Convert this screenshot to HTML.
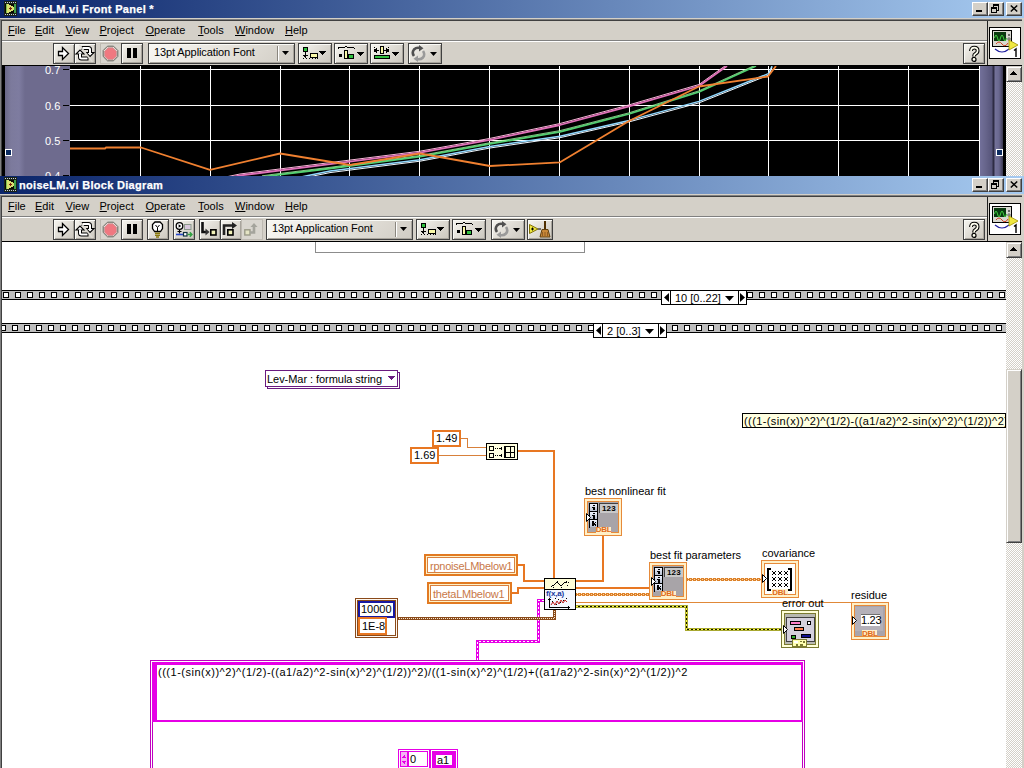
<!DOCTYPE html><html><head><meta charset="utf-8"><title>noiseLM.vi</title><style>
*{margin:0;padding:0;box-sizing:border-box}
html,body{width:1024px;height:768px;overflow:hidden;background:#D4D0C8;font-family:"Liberation Sans",sans-serif;font-size:11px;color:#000;position:relative;white-space:nowrap}
.a{position:absolute}
.tb{position:absolute;left:0;width:1024px;height:18px;background:linear-gradient(to right,#0A246A 0%,#A6CAF0 100%)}
.tt{position:absolute;left:19px;color:#fff;font-weight:bold;font-size:11px;letter-spacing:0.3px;-webkit-text-stroke:0.25px #fff;white-space:nowrap;line-height:14px}
.cb{position:absolute;width:16px;height:14px;background:#D4D0C8;border-top:1px solid #fff;border-left:1px solid #fff;border-right:1px solid #404040;border-bottom:1px solid #404040;box-shadow:inset -1px -1px #808080}
.mi{position:absolute;white-space:nowrap;font-size:11px;line-height:13px}
.btn{position:absolute;height:20px;background:linear-gradient(135deg,#F6F5F0 0%,#E2DFD8 45%,#CBC7BE 100%);border:1px solid #404040;box-shadow:inset 1px 1px #fafaf6,inset -1px -1px #a8a49c}
.film{position:absolute;left:2px;width:1004px;height:10px;background:#BEBEBE;border-top:1px solid #000;border-bottom:1px solid #000;overflow:hidden}
.sq{position:absolute;top:1px;width:6px;height:6px;border:1px solid #000;background:#fff}
.lbl{position:absolute;white-space:nowrap;font-size:11px;line-height:14px;color:#000}
svg{position:absolute;overflow:visible}
</style></head><body><div class="tb" style="top:0px"></div><svg style="left:4px;top:1px" width="13" height="15" viewBox="0 0 13 15" shape-rendering="crispEdges">
<rect x="0" y="0" width="13" height="15" fill="#1a2418"/>
<path d="M1 1.5h1M3 1.5h1M5 1.5h1M7 1.5h1M9 1.5h1M11 1.5h1M1 13.5h1M3 13.5h1M5 13.5h1M7 13.5h1M9 13.5h1M11 13.5h1" stroke="#c8d0e0"/>
<rect x="1" y="3" width="11" height="9" fill="#0a0a04"/>
<path d="M3 3h2v1h2v1h2v1h2v3h-2v1h-2v1h-2v1h-2z" fill="#D8E070"/>
<rect x="2" y="3" width="1" height="9" fill="#80c050"/>
<rect x="10" y="3" width="2" height="9" fill="#40a048"/>
<path d="M5 7h3v1h-3zM6 6h1v3h-1z" fill="#802010"/>
</svg><div class="tt" style="top:2px">noiseLM.vi Front Panel *</div><div class="cb" style="left:972px;top:2px"><div class="a" style="left:3px;top:7px;width:6px;height:2px;background:#000;"></div></div><div class="cb" style="left:988px;top:2px"><svg style="left:2px;top:1px" width="9" height="9" viewBox="0 0 9 9" shape-rendering="crispEdges">
<rect x="2" y="0" width="6" height="2" fill="#000"/><path d="M7.5 2v4h-2M2.5 2v1" stroke="#000" fill="none"/>
<rect x="0" y="3" width="6" height="2" fill="#000"/><path d="M0.5 5v3.5h5v-3.5" stroke="#000" fill="none"/></svg></div><div class="cb" style="left:1006px;top:2px"><svg style="left:3px;top:2px" width="8" height="7" viewBox="0 0 8 7">
<path d="M0.8 0.5L7.2 6.5M7.2 0.5L0.8 6.5" stroke="#000" stroke-width="1.5"/></svg></div><div class="a" style="left:0px;top:18px;width:1024px;height:1px;background:#D4D0C8;"></div><div class="a" style="left:0px;top:19px;width:1022px;height:1px;background:#808080;"></div><div class="a" style="left:1px;top:20px;width:1021px;height:1px;background:#404040;"></div><div class="a" style="left:0px;top:19px;width:1px;height:600px;background:#808080;"></div><div class="a" style="left:1px;top:20px;width:1px;height:600px;background:#404040;"></div><div class="mi" style="left:8px;top:24px"><u>F</u>ile</div><div class="mi" style="left:35px;top:24px"><u>E</u>dit</div><div class="mi" style="left:65.5px;top:24px"><u>V</u>iew</div><div class="mi" style="left:99.5px;top:24px"><u>P</u>roject</div><div class="mi" style="left:145.5px;top:24px"><u>O</u>perate</div><div class="mi" style="left:198px;top:24px"><u>T</u>ools</div><div class="mi" style="left:235px;top:24px"><u>W</u>indow</div><div class="mi" style="left:285px;top:24px"><u>H</u>elp</div><div class="a" style="left:2px;top:40px;width:985px;height:1px;background:#808080;"></div><div class="a" style="left:2px;top:41px;width:985px;height:1px;background:#FFFFFF;"></div><div class="a" style="left:987px;top:21px;width:1px;height:45px;background:#202020;"></div><div class="a" style="left:989px;top:27px;width:32px;height:32px;background:#fff;border:1px solid #000">
<svg style="left:2px;top:2px" width="28" height="28" viewBox="0 0 28 28">
<rect x="0.5" y="0.5" width="19" height="16" fill="#d8d8d0" stroke="#000"/>
<rect x="2" y="2" width="12" height="9" fill="#0a3a10"/>
<path d="M2.5 8 q1.5 -6 3 0 t3 0 t3 0 t3 0" stroke="#40d040" fill="none" stroke-width="1"/>
<circle cx="17" cy="5" r="1" fill="#444"/><circle cx="17" cy="9" r="1.2" fill="none" stroke="#444" stroke-width="0.8"/>
<path d="M3 19 q7 6 14 0" stroke="#2020a0" fill="none" stroke-width="1.2"/>
<path d="M4 14 q3 -4 6 0 t6 -1" stroke="#d04020" fill="none" stroke-width="1"/>
<path d="M17 10 L17 20 L26 15 Z" fill="#f0e840" stroke="#a09000" stroke-width="0.8"/>
<path d="M22 20.5l2-1.5v8" stroke="#000" stroke-width="1.4" fill="none"/>
</svg></div><div class="btn" style="left:963px;top:43px;width:22px;height:21px"><svg style="left:5px;top:2px" width="11" height="16" viewBox="0 0 11 16">
<path d="M2 5 Q2 1.6 5.2 1.6 Q8.6 1.6 8.6 4.8 Q8.6 6.8 6.6 7.8 Q5 8.6 5 10.4" fill="none" stroke="#000" stroke-width="3.8"/>
<path d="M2 5 Q2 1.6 5.2 1.6 Q8.6 1.6 8.6 4.8 Q8.6 6.8 6.6 7.8 Q5 8.6 5 10.4" fill="none" stroke="#fffff0" stroke-width="1.7"/>
<circle cx="5" cy="13.4" r="2" fill="#fffff0" stroke="#000" stroke-width="1.2"/></svg></div><div class="btn" style="left:53px;top:43px;width:22px;height:21px"></div><div class="btn" style="left:74px;top:43px;width:22px;height:21px"></div><div class="a" style="left:100px;top:43px;width:22px;height:21px;background:#D9D6CF;border:1px solid #BDB9B1"></div><div class="btn" style="left:121px;top:43px;width:22px;height:21px"></div><div class="btn" style="left:148px;top:43px;width:147px;height:21px;background:linear-gradient(135deg,#F8F7F3,#E6E3DC 50%,#D0CCC4)"><div class="a" style="left:5px;top:1px;font-size:11px;line-height:14px;white-space:nowrap;letter-spacing:-0.1px">13pt Application Font</div></div><div class="btn" style="left:298px;top:43px;width:34px;height:21px"></div><div class="btn" style="left:334px;top:43px;width:34px;height:21px"></div><div class="btn" style="left:370px;top:43px;width:34px;height:21px"></div><div class="btn" style="left:408px;top:43px;width:34px;height:21px"></div><svg style="left:0;top:0" width="1024" height="768"><path d="M58.5 51.5H62.5V47.5L68.5 53.5L62.5 59.5V55.5H58.5Z" fill="#fff" stroke="#000" stroke-width="1.3" stroke-linejoin="miter"/><g transform="translate(0,-176)"><path d="M81.5 224H88.5Q90 224 90 225.5V228.5" fill="none" stroke="#000" stroke-width="4"/><path d="M86 228.5L94 228.5L90 232.5Z" fill="#fff" stroke="#000" stroke-width="1.1"/><path d="M82.5 224H88.5Q90 224 90 225.5V229" fill="none" stroke="#fff" stroke-width="2"/><path d="M88.5 234.5H81.5Q80 234.5 80 233V230" fill="none" stroke="#000" stroke-width="4"/><path d="M76 230L84 230L80 226Z" fill="#fff" stroke="#000" stroke-width="1.1"/><path d="M87.5 234.5H81.5Q80 234.5 80 233V229.5" fill="none" stroke="#fff" stroke-width="2"/><path d="M79.5 221L92.5 238" stroke="#DEDBD4" stroke-width="1.3"/></g><g transform="translate(0,-176)"><path d="M107.5 222.2h6l4.3 4.3v6l-4.3 4.3h-6l-4.3-4.3v-6z" fill="#F2E8E4" stroke="#606058" stroke-width="1"/><path d="M108 223.8h5l3.4 3.4v5l-3.4 3.4h-5l-3.4-3.4v-5z" fill="#F07880" stroke="#C09090" stroke-width="0.8"/></g><rect x="127" y="48" width="4" height="10" fill="#000"/><rect x="133" y="48" width="4" height="10" fill="#000"/><rect x="277" y="46" width="1" height="15" fill="#8A867E"/><rect x="278" y="46" width="1" height="15" fill="#fff"/><path d="M282 51h7l-3.5 4z" fill="#000"/><g transform="translate(298,43)" shape-rendering="crispEdges"><rect x="5.5" y="4.5" width="4" height="4" fill="#30C040" stroke="#000"/><path d="M7.5 9V14M5 12.5h5" stroke="#000"/><path d="M6 12l1.5 2l1.5-2" stroke="#000" fill="none"/><rect x="12.5" y="10.5" width="7" height="4" fill="#F8F8A8" stroke="#000"/><path d="M5 15.5h1M8 15.5h1M11 15.5h1M14 15.5h1M17 15.5h1M19 15.5h1" stroke="#000"/><path d="M21 8h7l-3.5 4z" fill="#000"/></g><g transform="translate(334,43)" shape-rendering="crispEdges"><path d="M4 4.5h7M13 4.5h7M11 3.5h2" stroke="#000"/><path d="M4 5v1M20 5v1" stroke="#000"/><rect x="5" y="11" width="3" height="3" fill="#000"/><rect x="10.5" y="7.5" width="3" height="8" fill="#F8F8A8" stroke="#000"/><rect x="14.5" y="11.5" width="5" height="4" fill="#30C040" stroke="#000"/><path d="M23 9h7l-3.5 4z" fill="#000"/></g><g transform="translate(370,43)" shape-rendering="crispEdges"><path d="M4.5 4v1M4.5 6v1M4.5 8v1M18.5 4v1M18.5 6v1M18.5 8v1" stroke="#000"/><path d="M5 7.5h4M14 7.5h4" stroke="#000"/><path d="M7 5.5l-2 2l2 2M16 5.5l2 2l-2 2" stroke="#000" fill="none"/><rect x="10.5" y="3.5" width="3" height="7" fill="#F8F8A8" stroke="#000"/><rect x="4.5" y="12.5" width="15" height="3" fill="#30C040" stroke="#000"/><path d="M22 9h7l-3.5 4z" fill="#000"/></g><g transform="translate(408,43)"><path d="M6 13Q3.5 9.5 6 6.5Q8.5 4 12 5" fill="none" stroke="#505050" stroke-width="2.6"/><path d="M11 2L15.5 5.2L11 8.5Z" fill="#505050"/><path d="M15 8Q17.5 11.5 15 14.5Q12.5 17 9 16" fill="none" stroke="#9A9A9A" stroke-width="2.6"/><path d="M10 19L5.5 15.8L10 12.5Z" fill="#9A9A9A"/><path d="M22 9h7l-3.5 4z" fill="#000"/></g></svg><div class="a" style="left:2px;top:65px;width:1020px;height:1px;background:#000;"></div><div class="a" style="left:2px;top:66px;width:3px;height:110px;background:#000;"></div><div class="a" style="left:5px;top:66px;width:65px;height:110px;background:linear-gradient(to right,#6a6888 0px,#7c7a9c 6px,#7e7ca0 14px,#6e6b8e 20px,#6e6b8e 100%)"></div><div class="a" style="left:70px;top:66px;width:910px;height:110px;background:#000;"></div><div class="a" style="left:980px;top:66px;width:23px;height:110px;background:linear-gradient(to right,#72709A 0px,#66648A 6px,#56547A 12px,#2E2C44 13px,#2E2C44 14px,#74729A 15px,#6A6890 19px,#3A3850 23px)"></div><div class="a" style="left:1003px;top:66px;width:3px;height:110px;background:#000;"></div><div class="a" style="left:45px;top:63px;color:#fff;font-size:11px;line-height:14px">0.7</div><div class="a" style="left:63px;top:69px;width:6px;height:1px;background:#000;"></div><div class="a" style="left:45px;top:99px;color:#fff;font-size:11px;line-height:14px">0.6</div><div class="a" style="left:63px;top:105px;width:6px;height:1px;background:#000;"></div><div class="a" style="left:45px;top:134px;color:#fff;font-size:11px;line-height:14px">0.5</div><div class="a" style="left:63px;top:140px;width:6px;height:1px;background:#000;"></div><div class="a" style="left:45px;top:169px;color:#fff;font-size:11px;line-height:14px">0.4</div><div class="a" style="left:63px;top:175px;width:6px;height:1px;background:#000;"></div><div class="a" style="left:5px;top:149px;width:7px;height:7px;background:#0a2a60;border:1px solid #fff"></div><div class="a" style="left:996px;top:149px;width:7px;height:7px;background:#0a2a60;border:1px solid #fff"></div><svg style="left:0;top:0" width="1024" height="176" viewBox="0 0 1024 176"><g shape-rendering="crispEdges"><rect x="140" y="66" width="1" height="110" fill="#fff"/><rect x="210" y="66" width="1" height="110" fill="#fff"/><rect x="280" y="66" width="1" height="110" fill="#fff"/><rect x="349" y="66" width="1" height="110" fill="#fff"/><rect x="419" y="66" width="1" height="110" fill="#fff"/><rect x="489" y="66" width="1" height="110" fill="#fff"/><rect x="559" y="66" width="1" height="110" fill="#fff"/><rect x="629" y="66" width="1" height="110" fill="#fff"/><rect x="699" y="66" width="1" height="110" fill="#fff"/><rect x="768" y="66" width="1" height="110" fill="#fff"/><rect x="838" y="66" width="1" height="110" fill="#fff"/><rect x="908" y="66" width="1" height="110" fill="#fff"/><rect x="979" y="66" width="1" height="110" fill="#fff"/><rect x="70" y="69" width="910" height="1" fill="#fff"/><rect x="70" y="105" width="910" height="1" fill="#fff"/><rect x="70" y="140" width="910" height="1" fill="#fff"/></g><g fill="none" stroke-linejoin="round"><clipPath id="pc"><rect x="70" y="66" width="910" height="110"/></clipPath><g clip-path="url(#pc)"><polyline points="228,176.5 240,174.0 330,162.6 420,151.2 490,138.4 560,123.5 629,104.9 699,84.5 727,64.5" stroke="#F8B8D8" stroke-width="1"/><polyline points="228,178 240,175.5 330,164.1 420,152.7 490,139.9 560,125 629,106.4 699,86 727,66" stroke="#E070B8" stroke-width="1.8"/><polyline points="262,177 280,174.6 330,168.5 420,156.7 490,143.9 560,131.8 629,114 699,92 756,66" stroke="#50D070" stroke-width="1.8"/><polyline points="262,175.8 280,173.4 330,167.3 420,155.5 490,142.70000000000002 560,130.60000000000002 629,112.8 699,90.8 756,64.8" stroke="#A0F0A0" stroke-width="0.8"/><polyline points="296,178 330,171.1 420,159.7 490,146.5 560,136.2 629,120.4 699,101.4 769,73.4 772,66" stroke="#90D8FF" stroke-width="1.5"/><polyline points="296,179.5 330,172.6 420,161.2 490,148.0 560,137.7 629,121.9 699,102.9 769,74.9 772,67.5" stroke="#F0F8FF" stroke-width="1"/><polyline points="70,148.5 105,148.5 106,147.5 141,147.5 210,169.8 280,153.5 350,165 420,153.5 490,166 560,162.3 629,121 699,86.5 768,76.5 776,66" stroke="#F08030" stroke-width="1.8"/></g></g></svg><div class="a" style="left:1006px;top:82px;width:16px;height:94px;background-color:#fff;background-image:linear-gradient(45deg,#D4D0C8 25%,transparent 25%,transparent 75%,#D4D0C8 75%),linear-gradient(45deg,#D4D0C8 25%,transparent 25%,transparent 75%,#D4D0C8 75%);background-size:2px 2px;background-position:0 0,1px 1px"></div><div class="a" style="left:1006px;top:66px;width:16px;height:16px;background:#D4D0C8;border-top:1px solid #D4D0C8;border-left:1px solid #D4D0C8;border-right:1px solid #404040;border-bottom:1px solid #404040;box-shadow:inset 1px 1px #fff,inset -1px -1px #808080"><svg style="left:3px;top:4px" width="7" height="4" viewBox="0 0 7 4" shape-rendering="crispEdges"><path d="M3 0h1v1h1v1h1v1h1v1h-7v-1h1v-1h1v-1h1z" fill="#000"/></svg></div><div class="a" style="left:1022px;top:66px;width:2px;height:110px;background:#D4D0C8;"></div><div class="tb" style="top:176px"></div><svg style="left:4px;top:177px" width="13" height="15" viewBox="0 0 13 15" shape-rendering="crispEdges">
<rect x="0" y="0" width="13" height="15" fill="#1a2418"/>
<path d="M1 1.5h1M3 1.5h1M5 1.5h1M7 1.5h1M9 1.5h1M11 1.5h1M1 13.5h1M3 13.5h1M5 13.5h1M7 13.5h1M9 13.5h1M11 13.5h1" stroke="#c8d0e0"/>
<rect x="1" y="3" width="11" height="9" fill="#0a0a04"/>
<path d="M3 3h2v1h2v1h2v1h2v3h-2v1h-2v1h-2v1h-2z" fill="#D8E070"/>
<rect x="2" y="3" width="1" height="9" fill="#80c050"/>
<rect x="10" y="3" width="2" height="9" fill="#40a048"/>
<path d="M5 7h3v1h-3zM6 6h1v3h-1z" fill="#802010"/>
</svg><div class="tt" style="top:178px">noiseLM.vi Block Diagram</div><div class="cb" style="left:972px;top:178px"><div class="a" style="left:3px;top:7px;width:6px;height:2px;background:#000;"></div></div><div class="cb" style="left:988px;top:178px"><svg style="left:2px;top:1px" width="9" height="9" viewBox="0 0 9 9" shape-rendering="crispEdges">
<rect x="2" y="0" width="6" height="2" fill="#000"/><path d="M7.5 2v4h-2M2.5 2v1" stroke="#000" fill="none"/>
<rect x="0" y="3" width="6" height="2" fill="#000"/><path d="M0.5 5v3.5h5v-3.5" stroke="#000" fill="none"/></svg></div><div class="cb" style="left:1006px;top:178px"><svg style="left:3px;top:2px" width="8" height="7" viewBox="0 0 8 7">
<path d="M0.8 0.5L7.2 6.5M7.2 0.5L0.8 6.5" stroke="#000" stroke-width="1.5"/></svg></div><div class="a" style="left:0px;top:194px;width:1024px;height:1px;background:#D4D0C8;"></div><div class="a" style="left:0px;top:195px;width:1022px;height:1px;background:#808080;"></div><div class="a" style="left:1px;top:196px;width:1021px;height:1px;background:#404040;"></div><div class="a" style="left:0px;top:195px;width:1px;height:600px;background:#808080;"></div><div class="a" style="left:1px;top:196px;width:1px;height:600px;background:#404040;"></div><div class="mi" style="left:8px;top:200px"><u>F</u>ile</div><div class="mi" style="left:35px;top:200px"><u>E</u>dit</div><div class="mi" style="left:65.5px;top:200px"><u>V</u>iew</div><div class="mi" style="left:99.5px;top:200px"><u>P</u>roject</div><div class="mi" style="left:145.5px;top:200px"><u>O</u>perate</div><div class="mi" style="left:198px;top:200px"><u>T</u>ools</div><div class="mi" style="left:235px;top:200px"><u>W</u>indow</div><div class="mi" style="left:285px;top:200px"><u>H</u>elp</div><div class="a" style="left:2px;top:216px;width:985px;height:1px;background:#808080;"></div><div class="a" style="left:2px;top:217px;width:985px;height:1px;background:#FFFFFF;"></div><div class="a" style="left:987px;top:197px;width:1px;height:45px;background:#202020;"></div><div class="a" style="left:989px;top:203px;width:32px;height:32px;background:#fff;border:1px solid #000">
<svg style="left:2px;top:2px" width="28" height="28" viewBox="0 0 28 28">
<rect x="0.5" y="0.5" width="19" height="16" fill="#d8d8d0" stroke="#000"/>
<rect x="2" y="2" width="12" height="9" fill="#0a3a10"/>
<path d="M2.5 8 q1.5 -6 3 0 t3 0 t3 0 t3 0" stroke="#40d040" fill="none" stroke-width="1"/>
<circle cx="17" cy="5" r="1" fill="#444"/><circle cx="17" cy="9" r="1.2" fill="none" stroke="#444" stroke-width="0.8"/>
<path d="M3 19 q7 6 14 0" stroke="#2020a0" fill="none" stroke-width="1.2"/>
<path d="M4 14 q3 -4 6 0 t6 -1" stroke="#d04020" fill="none" stroke-width="1"/>
<path d="M17 10 L17 20 L26 15 Z" fill="#f0e840" stroke="#a09000" stroke-width="0.8"/>
<path d="M22 20.5l2-1.5v8" stroke="#000" stroke-width="1.4" fill="none"/>
</svg></div><div class="btn" style="left:963px;top:219px;width:22px;height:21px"><svg style="left:5px;top:2px" width="11" height="16" viewBox="0 0 11 16">
<path d="M2 5 Q2 1.6 5.2 1.6 Q8.6 1.6 8.6 4.8 Q8.6 6.8 6.6 7.8 Q5 8.6 5 10.4" fill="none" stroke="#000" stroke-width="3.8"/>
<path d="M2 5 Q2 1.6 5.2 1.6 Q8.6 1.6 8.6 4.8 Q8.6 6.8 6.6 7.8 Q5 8.6 5 10.4" fill="none" stroke="#fffff0" stroke-width="1.7"/>
<circle cx="5" cy="13.4" r="2" fill="#fffff0" stroke="#000" stroke-width="1.2"/></svg></div><div class="btn" style="left:53px;top:219px;width:22px;height:21px"></div><div class="btn" style="left:74px;top:219px;width:22px;height:21px"></div><div class="a" style="left:100px;top:219px;width:22px;height:21px;background:#D9D6CF;border:1px solid #BDB9B1"></div><div class="btn" style="left:121px;top:219px;width:22px;height:21px"></div><div class="btn" style="left:147px;top:219px;width:22px;height:21px"></div><div class="btn" style="left:173px;top:219px;width:22px;height:21px"></div><div class="btn" style="left:199px;top:219px;width:22px;height:21px"></div><div class="btn" style="left:220px;top:219px;width:22px;height:21px"></div><div class="a" style="left:241px;top:219px;width:22px;height:21px;background:#D9D6CF;border:1px solid #BDB9B1"></div><div class="btn" style="left:266px;top:219px;width:147px;height:21px;background:linear-gradient(135deg,#F8F7F3,#E6E3DC 50%,#D0CCC4)"><div class="a" style="left:5px;top:1px;font-size:11px;line-height:14px;white-space:nowrap;letter-spacing:-0.1px">13pt Application Font</div></div><div class="btn" style="left:416px;top:219px;width:34px;height:21px"></div><div class="btn" style="left:452px;top:219px;width:34px;height:21px"></div><div class="btn" style="left:491px;top:219px;width:34px;height:21px"></div><div class="btn" style="left:527px;top:219px;width:26px;height:21px"></div><svg style="left:0;top:0" width="1024" height="768"><path d="M58.5 227.5H62.5V223.5L68.5 229.5L62.5 235.5V231.5H58.5Z" fill="#fff" stroke="#000" stroke-width="1.3" stroke-linejoin="miter"/><g transform="translate(0,0)"><path d="M81.5 224H88.5Q90 224 90 225.5V228.5" fill="none" stroke="#000" stroke-width="4"/><path d="M86 228.5L94 228.5L90 232.5Z" fill="#fff" stroke="#000" stroke-width="1.1"/><path d="M82.5 224H88.5Q90 224 90 225.5V229" fill="none" stroke="#fff" stroke-width="2"/><path d="M88.5 234.5H81.5Q80 234.5 80 233V230" fill="none" stroke="#000" stroke-width="4"/><path d="M76 230L84 230L80 226Z" fill="#fff" stroke="#000" stroke-width="1.1"/><path d="M87.5 234.5H81.5Q80 234.5 80 233V229.5" fill="none" stroke="#fff" stroke-width="2"/><path d="M79.5 221L92.5 238" stroke="#DEDBD4" stroke-width="1.3"/></g><g transform="translate(0,0)"><path d="M107.5 222.2h6l4.3 4.3v6l-4.3 4.3h-6l-4.3-4.3v-6z" fill="#F2E8E4" stroke="#606058" stroke-width="1"/><path d="M108 223.8h5l3.4 3.4v5l-3.4 3.4h-5l-3.4-3.4v-5z" fill="#F07880" stroke="#C09090" stroke-width="0.8"/></g><rect x="127" y="224" width="4" height="10" fill="#000"/><rect x="133" y="224" width="4" height="10" fill="#000"/><g transform="translate(0,0)"><path d="M154.5 231.5L152.5 228.5V224.5L155 222H160L162.5 224.5V228.5L160.5 231.5Z" fill="#fff" stroke="#000" stroke-width="1.3"/><path d="M155.5 225L157.5 227.5L159.5 225M157.5 227.5V231.5" fill="none" stroke="#000" stroke-width="1"/><path d="M155 233.2H160M155 235.2H160M156 237H159" stroke="#8A7A10" stroke-width="1.4"/></g><g transform="translate(0,0)"><rect x="184.5" y="224.5" width="6.5" height="5" fill="#D8C8DC" stroke="#8A9A8A"/><circle cx="179.5" cy="226" r="3.3" fill="#fff" stroke="#000" stroke-width="1.3"/><path d="M178.6 224.3L181.2 226L178.6 227.7Z" fill="#000"/><path d="M179.5 229.5V233.5M177.5 231.5H181.5" stroke="#000" stroke-width="1.2"/><path d="M176 234.5H184" stroke="#2848C8" stroke-width="1.6"/><rect x="183.5" y="232.5" width="3.5" height="3.5" fill="#fff" stroke="#103040" stroke-width="1.2"/><path d="M187.5 234.5H192M189.8 232.2L192 234.5L189.8 236.8" fill="none" stroke="#30A040" stroke-width="1.4"/></g><g transform="translate(0,0)"><path d="M202.5 222V232H207" fill="none" stroke="#111" stroke-width="2.6"/><path d="M205.5 228.5L209.5 232L205.5 235.5Z" fill="#333"/><rect x="210.8" y="229.8" width="5.2" height="5.2" fill="#F2F2B8" stroke="#000" stroke-width="1.6"/></g><g transform="translate(0,0)"><path d="M224 235V225.5H233" fill="none" stroke="#222" stroke-width="2.6"/><path d="M232 222L237 225.5L232 229Z" fill="#222"/><rect x="227.8" y="229.8" width="5.2" height="5.2" fill="#F2F2B8" stroke="#000" stroke-width="1.6"/></g><g transform="translate(0,0)"><rect x="244.8" y="229.8" width="5.2" height="5.2" fill="#E4E4C4" stroke="#9A9A88" stroke-width="1.4"/><path d="M250 232.5H254V226" fill="none" stroke="#A4A49C" stroke-width="2.6"/><path d="M250.5 227L254 223L257.5 227Z" fill="#A4A49C"/></g><rect x="395" y="222" width="1" height="15" fill="#8A867E"/><rect x="396" y="222" width="1" height="15" fill="#fff"/><path d="M400 227h7l-3.5 4z" fill="#000"/><g transform="translate(416,219)" shape-rendering="crispEdges"><rect x="5.5" y="4.5" width="4" height="4" fill="#30C040" stroke="#000"/><path d="M7.5 9V14M5 12.5h5" stroke="#000"/><path d="M6 12l1.5 2l1.5-2" stroke="#000" fill="none"/><rect x="12.5" y="10.5" width="7" height="4" fill="#F8F8A8" stroke="#000"/><path d="M5 15.5h1M8 15.5h1M11 15.5h1M14 15.5h1M17 15.5h1M19 15.5h1" stroke="#000"/><path d="M21 8h7l-3.5 4z" fill="#000"/></g><g transform="translate(452,219)" shape-rendering="crispEdges"><path d="M4 4.5h7M13 4.5h7M11 3.5h2" stroke="#000"/><path d="M4 5v1M20 5v1" stroke="#000"/><rect x="5" y="11" width="3" height="3" fill="#000"/><rect x="10.5" y="7.5" width="3" height="8" fill="#F8F8A8" stroke="#000"/><rect x="14.5" y="11.5" width="5" height="4" fill="#30C040" stroke="#000"/><path d="M23 9h7l-3.5 4z" fill="#000"/></g><g transform="translate(491,219)"><path d="M6 13Q3.5 9.5 6 6.5Q8.5 4 12 5" fill="none" stroke="#505050" stroke-width="2.6"/><path d="M11 2L15.5 5.2L11 8.5Z" fill="#505050"/><path d="M15 8Q17.5 11.5 15 14.5Q12.5 17 9 16" fill="none" stroke="#9A9A9A" stroke-width="2.6"/><path d="M10 19L5.5 15.8L10 12.5Z" fill="#9A9A9A"/><path d="M22 9h7l-3.5 4z" fill="#000"/></g><g transform="translate(527,219)"><path d="M2.5 5.5L11 10L2.5 14.5Z" fill="#F0E840" stroke="#807000" stroke-width="1"/><path d="M4 10h3M5.5 8.5v3" stroke="#000" stroke-width="1"/><path d="M11 10h3" stroke="#000"/><path d="M18 2V11" stroke="#503000" stroke-width="2"/><path d="M13 18L15 10.5H21L23 18Z" fill="#C88838" stroke="#604010" stroke-width="1"/><path d="M15.5 13v4M18 13v4M20.5 13v4" stroke="#805020" stroke-width="0.8"/></g></svg><div class="a" style="left:2px;top:241px;width:1020px;height:1px;background:#000;"></div><div class="a" style="left:2px;top:242px;width:1004px;height:526px;background:#FFFFFF;"></div><div class="a" style="left:1006px;top:258px;width:16px;height:510px;background-color:#fff;background-image:linear-gradient(45deg,#D4D0C8 25%,transparent 25%,transparent 75%,#D4D0C8 75%),linear-gradient(45deg,#D4D0C8 25%,transparent 25%,transparent 75%,#D4D0C8 75%);background-size:2px 2px;background-position:0 0,1px 1px"></div><div class="a" style="left:1006px;top:242px;width:16px;height:16px;background:#D4D0C8;border-top:1px solid #D4D0C8;border-left:1px solid #D4D0C8;border-right:1px solid #404040;border-bottom:1px solid #404040;box-shadow:inset 1px 1px #fff,inset -1px -1px #808080"><svg style="left:3px;top:4px" width="7" height="4" viewBox="0 0 7 4" shape-rendering="crispEdges"><path d="M3 0h1v1h1v1h1v1h1v1h-7v-1h1v-1h1v-1h1z" fill="#000"/></svg></div><div class="a" style="left:1006px;top:369px;width:16px;height:174px;background:#D4D0C8;border-top:1px solid #D4D0C8;border-left:1px solid #D4D0C8;border-right:1px solid #404040;border-bottom:1px solid #404040;box-shadow:inset 1px 1px #fff,inset -1px -1px #808080"></div><div class="a" style="left:1022px;top:242px;width:2px;height:526px;background:#D4D0C8;"></div><svg style="left:0;top:0" width="1024" height="768" viewBox="0 0 1024 768" shape-rendering="crispEdges" fill="none"><path d="M461 438.5H467.5V447.5H486" stroke="#D8803A" stroke-width="1"/><path d="M439 455.5H486" stroke="#D8803A" stroke-width="1"/><path d="M518 451H554V578" stroke="#E87722" stroke-width="2"/><path d="M518 565H524V581H544" stroke="#E87722" stroke-width="2"/><path d="M576 581H603V536" stroke="#E87722" stroke-width="2"/><path d="M512 593H518V588H544" stroke="#E87722" stroke-width="2"/><path d="M576 588H650" stroke="#E87722" stroke-width="2"/><path d="M576 594.5H650" stroke="#DC8028" stroke-width="3"/><path d="M577 593.5H650" stroke="#FFE8C8" stroke-width="1" stroke-dasharray="1 3"/><path d="M577 595.5H650" stroke="#FFE8C8" stroke-width="1" stroke-dasharray="1 3"/><path d="M579 594.5H650" stroke="#F8D0A0" stroke-width="1" stroke-dasharray="1 3"/><path d="M687 579.5H761" stroke="#DC8028" stroke-width="3"/><path d="M688 578.5H761" stroke="#FFE8C8" stroke-width="1" stroke-dasharray="1 3"/><path d="M688 580.5H761" stroke="#FFE8C8" stroke-width="1" stroke-dasharray="1 3"/><path d="M690 579.5H761" stroke="#F8D0A0" stroke-width="1" stroke-dasharray="1 3"/><path d="M576 602.5H851" stroke="#E08838" stroke-width="1"/><path d="M576 606.5H686.5V629.5H781" stroke="#A8A830" stroke-width="3"/><path d="M576 606.5H686.5V629.5H781" stroke="#101000" stroke-width="1"/><path d="M576 606.5H686.5V629.5H781" stroke="#F8F840" stroke-width="1" stroke-dasharray="2 2"/><path d="M477.5 660V641.5H538.5V600.5H544" stroke="#E600E6" stroke-width="3"/><path d="M477.5 660V641.5H538.5V600.5H544" stroke="#fff" stroke-width="1" stroke-dasharray="2 2"/><path d="M397 618.5H554.5V610" stroke="#8a4a1a" stroke-width="3"/><path d="M397 618.5H554.5V610" stroke="#F8E8D0" stroke-width="1" stroke-dasharray="1 1"/></svg><div class="a" style="left:315px;top:242px;width:270px;height:11px;border:1px solid #8c8c8c;border-top:none"></div><div class="film" style="top:290px"><div class="sq" style="left:1px"></div><div class="sq" style="left:13px"></div><div class="sq" style="left:25px"></div><div class="sq" style="left:37px"></div><div class="sq" style="left:49px"></div><div class="sq" style="left:61px"></div><div class="sq" style="left:73px"></div><div class="sq" style="left:85px"></div><div class="sq" style="left:97px"></div><div class="sq" style="left:109px"></div><div class="sq" style="left:121px"></div><div class="sq" style="left:133px"></div><div class="sq" style="left:145px"></div><div class="sq" style="left:157px"></div><div class="sq" style="left:169px"></div><div class="sq" style="left:181px"></div><div class="sq" style="left:193px"></div><div class="sq" style="left:205px"></div><div class="sq" style="left:217px"></div><div class="sq" style="left:229px"></div><div class="sq" style="left:241px"></div><div class="sq" style="left:253px"></div><div class="sq" style="left:265px"></div><div class="sq" style="left:277px"></div><div class="sq" style="left:289px"></div><div class="sq" style="left:301px"></div><div class="sq" style="left:313px"></div><div class="sq" style="left:325px"></div><div class="sq" style="left:337px"></div><div class="sq" style="left:349px"></div><div class="sq" style="left:361px"></div><div class="sq" style="left:373px"></div><div class="sq" style="left:385px"></div><div class="sq" style="left:397px"></div><div class="sq" style="left:409px"></div><div class="sq" style="left:421px"></div><div class="sq" style="left:433px"></div><div class="sq" style="left:445px"></div><div class="sq" style="left:457px"></div><div class="sq" style="left:469px"></div><div class="sq" style="left:481px"></div><div class="sq" style="left:493px"></div><div class="sq" style="left:505px"></div><div class="sq" style="left:517px"></div><div class="sq" style="left:529px"></div><div class="sq" style="left:541px"></div><div class="sq" style="left:553px"></div><div class="sq" style="left:565px"></div><div class="sq" style="left:577px"></div><div class="sq" style="left:589px"></div><div class="sq" style="left:601px"></div><div class="sq" style="left:613px"></div><div class="sq" style="left:625px"></div><div class="sq" style="left:637px"></div><div class="sq" style="left:649px"></div><div class="sq" style="left:661px"></div><div class="sq" style="left:673px"></div><div class="sq" style="left:685px"></div><div class="sq" style="left:697px"></div><div class="sq" style="left:709px"></div><div class="sq" style="left:721px"></div><div class="sq" style="left:733px"></div><div class="sq" style="left:745px"></div><div class="sq" style="left:757px"></div><div class="sq" style="left:769px"></div><div class="sq" style="left:781px"></div><div class="sq" style="left:793px"></div><div class="sq" style="left:805px"></div><div class="sq" style="left:817px"></div><div class="sq" style="left:829px"></div><div class="sq" style="left:841px"></div><div class="sq" style="left:853px"></div><div class="sq" style="left:865px"></div><div class="sq" style="left:877px"></div><div class="sq" style="left:889px"></div><div class="sq" style="left:901px"></div><div class="sq" style="left:913px"></div><div class="sq" style="left:925px"></div><div class="sq" style="left:937px"></div><div class="sq" style="left:949px"></div><div class="sq" style="left:961px"></div><div class="sq" style="left:973px"></div><div class="sq" style="left:985px"></div><div class="sq" style="left:997px"></div></div><div class="a" style="left:661px;top:290px;width:86px;height:15px;background:#fff;border:1px solid #000">
<div class="a" style="left:8px;top:0;width:1px;height:13px;background:#000"></div>
<div class="a" style="left:76px;top:0;width:1px;height:13px;background:#000"></div>
<svg style="left:1px;top:2px" width="6" height="9" viewBox="0 0 6 9"><path d="M6 0v9l-5-4.5z" fill="#000"/></svg>
<svg style="left:78px;top:2px" width="6" height="9" viewBox="0 0 6 9"><path d="M0 0v9l5-4.5z" fill="#000"/></svg>
<div class="a" style="left:13px;top:0px;font-size:11px;line-height:14px;white-space:nowrap">10 [0..22]</div>
<svg style="left:63px;top:5px" width="9" height="5" viewBox="0 0 9 5"><path d="M0 0h9l-4.5 5z" fill="#000"/></svg>
</div><div class="film" style="top:323px"><div class="sq" style="left:-2px"></div><div class="sq" style="left:10px"></div><div class="sq" style="left:22px"></div><div class="sq" style="left:34px"></div><div class="sq" style="left:46px"></div><div class="sq" style="left:58px"></div><div class="sq" style="left:70px"></div><div class="sq" style="left:82px"></div><div class="sq" style="left:94px"></div><div class="sq" style="left:106px"></div><div class="sq" style="left:118px"></div><div class="sq" style="left:130px"></div><div class="sq" style="left:142px"></div><div class="sq" style="left:154px"></div><div class="sq" style="left:166px"></div><div class="sq" style="left:178px"></div><div class="sq" style="left:190px"></div><div class="sq" style="left:202px"></div><div class="sq" style="left:214px"></div><div class="sq" style="left:226px"></div><div class="sq" style="left:238px"></div><div class="sq" style="left:250px"></div><div class="sq" style="left:262px"></div><div class="sq" style="left:274px"></div><div class="sq" style="left:286px"></div><div class="sq" style="left:298px"></div><div class="sq" style="left:310px"></div><div class="sq" style="left:322px"></div><div class="sq" style="left:334px"></div><div class="sq" style="left:346px"></div><div class="sq" style="left:358px"></div><div class="sq" style="left:370px"></div><div class="sq" style="left:382px"></div><div class="sq" style="left:394px"></div><div class="sq" style="left:406px"></div><div class="sq" style="left:418px"></div><div class="sq" style="left:430px"></div><div class="sq" style="left:442px"></div><div class="sq" style="left:454px"></div><div class="sq" style="left:466px"></div><div class="sq" style="left:478px"></div><div class="sq" style="left:490px"></div><div class="sq" style="left:502px"></div><div class="sq" style="left:514px"></div><div class="sq" style="left:526px"></div><div class="sq" style="left:538px"></div><div class="sq" style="left:550px"></div><div class="sq" style="left:562px"></div><div class="sq" style="left:574px"></div><div class="sq" style="left:586px"></div><div class="sq" style="left:598px"></div><div class="sq" style="left:610px"></div><div class="sq" style="left:622px"></div><div class="sq" style="left:634px"></div><div class="sq" style="left:646px"></div><div class="sq" style="left:658px"></div><div class="sq" style="left:670px"></div><div class="sq" style="left:682px"></div><div class="sq" style="left:694px"></div><div class="sq" style="left:706px"></div><div class="sq" style="left:718px"></div><div class="sq" style="left:730px"></div><div class="sq" style="left:742px"></div><div class="sq" style="left:754px"></div><div class="sq" style="left:766px"></div><div class="sq" style="left:778px"></div><div class="sq" style="left:790px"></div><div class="sq" style="left:802px"></div><div class="sq" style="left:814px"></div><div class="sq" style="left:826px"></div><div class="sq" style="left:838px"></div><div class="sq" style="left:850px"></div><div class="sq" style="left:862px"></div><div class="sq" style="left:874px"></div><div class="sq" style="left:886px"></div><div class="sq" style="left:898px"></div><div class="sq" style="left:910px"></div><div class="sq" style="left:922px"></div><div class="sq" style="left:934px"></div><div class="sq" style="left:946px"></div><div class="sq" style="left:958px"></div><div class="sq" style="left:970px"></div><div class="sq" style="left:982px"></div><div class="sq" style="left:994px"></div></div><div class="a" style="left:593px;top:323px;width:74px;height:15px;background:#fff;border:1px solid #000">
<div class="a" style="left:8px;top:0;width:1px;height:13px;background:#000"></div>
<div class="a" style="left:64px;top:0;width:1px;height:13px;background:#000"></div>
<svg style="left:1px;top:2px" width="6" height="9" viewBox="0 0 6 9"><path d="M6 0v9l-5-4.5z" fill="#000"/></svg>
<svg style="left:66px;top:2px" width="6" height="9" viewBox="0 0 6 9"><path d="M0 0v9l5-4.5z" fill="#000"/></svg>
<div class="a" style="left:13px;top:0px;font-size:11px;line-height:14px;white-space:nowrap">2 [0..3]</div>
<svg style="left:51px;top:5px" width="9" height="5" viewBox="0 0 9 5"><path d="M0 0h9l-4.5 5z" fill="#000"/></svg>
</div><div class="a" style="left:267px;top:372px;width:133px;height:17px;border:1px solid #6a1a80;background:#fff"></div>
<div class="a" style="left:265px;top:370px;width:133px;height:17px;border:1px solid #6a1a80;background:#fff">
<div class="a" style="left:1px;top:1px;font-size:11px;line-height:14px;white-space:nowrap;letter-spacing:-0.05px">Lev-Mar : formula string</div>
<svg style="left:122px;top:5px" width="7" height="4" shape-rendering="crispEdges"><path d="M0 0h7v1h-1v1h-1v1h-1v1h-1v-1h-1v-1h-1v-1h-1z" fill="#6a1a80"/></svg></div><div class="a" style="left:742px;top:413px;width:264px;height:15px;border-right:none;border:1px solid #000;background:#FFFFE1;overflow:hidden">
<div class="a" style="left:1px;top:0px;font-size:11px;line-height:14px;white-space:nowrap;letter-spacing:0.4px">(((1-(sin(x))^2)^(1/2)-((a1/a2)^2-sin(x)^2)^(1/2))^2)/((1-sin(x)^2)^(1/2)+((a1/a2)^2</div></div><div class="a" style="left:1006px;top:413px;width:16px;height:16px;background:transparent;"></div><div class="a" style="left:432px;top:430px;width:29px;height:17px;border:2px solid #E87722;background:#fff">
<div class="a" style="left:2px;top:0px;font-size:11px;line-height:13px;white-space:nowrap">1.49</div></div><div class="a" style="left:410px;top:447px;width:29px;height:17px;border:2px solid #E87722;background:#fff">
<div class="a" style="left:2px;top:0px;font-size:11px;line-height:13px;white-space:nowrap">1.69</div></div><div class="a" style="left:486px;top:443px;width:32px;height:17px;border:1px solid #000;background:#FFFFE0">
<svg style="left:2px;top:2px" width="27" height="12" viewBox="0 0 27 12" shape-rendering="crispEdges">
<rect x="0.5" y="0.5" width="4" height="4" fill="none" stroke="#000"/><rect x="0.5" y="7.5" width="4" height="4" fill="none" stroke="#000"/>
<path d="M6 2.5h1M8 2.5h1M10 2.5h1M6 9.5h1M8 9.5h1M10 9.5h1" stroke="#000"/><path d="M12 1v3M11 2.5h2M12 8v3M11 9.5h2" stroke="#000"/>
<path d="M15.5 0.5v11M15 0.5h1M15 11.5h1" stroke="#000"/>
<rect x="16.5" y="0.5" width="9" height="11" fill="none" stroke="#000"/><path d="M21 0.5v11M16.5 6h9" stroke="#000"/></svg></div><div class="a" style="left:424px;top:554px;width:94px;height:22px;border:2px solid #E27A22;background:#FFF2C8">
<div class="a" style="left:1px;top:1px;right:1px;bottom:1px;border:1px solid #D88040;background:#fff">
<div class="a" style="left:2px;top:1px;font-size:11px;line-height:14px;white-space:nowrap;color:#C87848;letter-spacing:-0.25px">rpnoiseLMbelow1</div></div></div><div class="a" style="left:427px;top:582px;width:85px;height:22px;border:2px solid #E27A22;background:#FFF2C8">
<div class="a" style="left:1px;top:1px;right:1px;bottom:1px;border:1px solid #D88040;background:#fff">
<div class="a" style="left:2px;top:1px;font-size:11px;line-height:14px;white-space:nowrap;color:#C87848;letter-spacing:-0.25px">thetaLMbelow1</div></div></div><div class="a" style="left:355px;top:598px;width:43px;height:40px;border:1px solid #8a4a1a;background:#FFF8F0"></div>
<div class="a" style="left:357px;top:600px;width:39px;height:36px;border:1px solid #8a4a1a;background:#fff"></div>
<div class="a" style="left:358px;top:601px;width:37px;height:17px;border:2px solid #1818a0;background:#fff"><div class="a" style="left:1px;top:0;font-size:11px;line-height:13px">10000</div></div>
<div class="a" style="left:358px;top:617px;width:29px;height:18px;border:2px solid #E87722;background:#fff"><div class="a" style="left:2px;top:1px;font-size:11px;line-height:13px">1E-8</div></div>
<svg style="left:0;top:0" width="1024" height="768" shape-rendering="crispEdges">
<rect x="544.5" y="578.5" width="31" height="31" fill="#fff" stroke="#000"/>
<rect x="545" y="579" width="30" height="10" fill="#FFFFD8"/>
<rect x="545" y="589" width="30" height="1" fill="#000"/>
<rect x="545" y="590" width="30" height="19" fill="#F4F8FF"/>
<path d="M551 586h1M552 585h2M554 584h1M555 583h1M556 582h2M558 583h1M559 584h1M560 585h2M562 584h1M563 583h1M564 582h3M566 581h1M568 582h1M553 587h1M557 581h1M561 587h1M567 585h1" stroke="#000"/>
<path d="M549 598h1M548 599h3M549 600v8M549 607h20M568 606v3M569 607h1" stroke="#000"/>
<path d="M551 605l2-3l2 3l2-4l2 3l2-4l2 3l2-3l2 2" stroke="#C02020" fill="none" shape-rendering="auto"/>
<path d="M552 601h1M556 604h1M558 599h1M560 602h1M563 600h1M566 598h1M555 598h1" stroke="#000"/>
</svg>
<div class="a" style="left:546px;top:590px;font-size:8px;line-height:8px;color:#1838A0;font-weight:bold;letter-spacing:-0.2px">f(x,a)</div>
<svg style="left:0;top:0" width="1" height="1"><defs><linearGradient id="cellg" x1="0" y1="0" x2="0" y2="1"><stop offset="0" stop-color="#f0f4ff"/><stop offset="1" stop-color="#b8c0d0"/></linearGradient></defs></svg><div class="lbl" style="left:585px;top:484px">best nonlinear fit</div><svg style="left:0;top:0" width="1024" height="768" shape-rendering="crispEdges"><rect x="584.5" y="498.5" width="37" height="37" fill="#FFF0C8" stroke="#E68A3A"/><rect x="587.5" y="501.5" width="31" height="31" fill="#A8A4A8" stroke="#E68A3A"/><rect x="589" y="503" width="9" height="25" fill="#000"/><rect x="590" y="504" width="7" height="7" fill="url(#cellg)"/><rect x="590" y="512" width="7" height="7" fill="url(#cellg)"/><rect x="590" y="520" width="7" height="7" fill="url(#cellg)"/><rect x="590" y="527" width="8" height="1" fill="#A8A4A8"/><rect x="599" y="503" width="19" height="10" fill="#404040"/><rect x="600" y="504" width="18" height="9" fill="#C8C8C8"/><path d="M586.5 513.5v8l4-4z" fill="#fff" stroke="#000" shape-rendering="auto"/><rect x="596" y="527" width="15" height="6" fill="#FFF0C8"/></svg><svg style="left:590px;top:504px" width="7" height="23" shape-rendering="crispEdges"><path d="M3 1h2v1h-2zM2 3h3v3h-2v-2h-1zM3 9h2v1h-2zM2 11h3v5h-4v-1h2v-3h-1zM2 17h2v2h1v-1h1v1h-1v1h1v2h-1v-1h-1v1h-2z" fill="#000"/></svg><div class="a" style="left:600px;top:504px;width:18px;font-size:8px;line-height:9px;font-weight:bold;text-align:center;letter-spacing:0.3px">123</div><div class="a" style="left:595px;top:526px;width:17px;font-size:8px;line-height:8px;font-weight:bold;text-align:center;letter-spacing:-0.3px;color:#E06A1A">DBL</div><div class="lbl" style="left:650px;top:548px">best fit parameters</div><svg style="left:0;top:0" width="1024" height="768" shape-rendering="crispEdges"><rect x="649.5" y="562.5" width="37" height="37" fill="#FFF0C8" stroke="#E68A3A"/><rect x="652.5" y="565.5" width="31" height="31" fill="#A8A4A8" stroke="#E68A3A"/><rect x="654" y="567" width="9" height="25" fill="#000"/><rect x="655" y="568" width="7" height="7" fill="url(#cellg)"/><rect x="655" y="576" width="7" height="7" fill="url(#cellg)"/><rect x="655" y="584" width="7" height="7" fill="url(#cellg)"/><rect x="655" y="591" width="8" height="1" fill="#A8A4A8"/><rect x="664" y="567" width="19" height="10" fill="#404040"/><rect x="665" y="568" width="18" height="9" fill="#C8C8C8"/><path d="M651.5 577.5v8l4-4z" fill="#fff" stroke="#000" shape-rendering="auto"/><rect x="661" y="591" width="15" height="6" fill="#FFF0C8"/></svg><svg style="left:655px;top:568px" width="7" height="23" shape-rendering="crispEdges"><path d="M3 1h2v1h-2zM2 3h3v3h-2v-2h-1zM3 9h2v1h-2zM2 11h3v5h-4v-1h2v-3h-1zM2 17h2v2h1v-1h1v1h-1v1h1v2h-1v-1h-1v1h-2z" fill="#000"/></svg><div class="a" style="left:665px;top:568px;width:18px;font-size:8px;line-height:9px;font-weight:bold;text-align:center;letter-spacing:0.3px">123</div><div class="a" style="left:660px;top:590px;width:17px;font-size:8px;line-height:8px;font-weight:bold;text-align:center;letter-spacing:-0.3px;color:#E06A1A">DBL</div><div class="lbl" style="left:762px;top:546px">covariance</div><svg style="left:0;top:0" width="1024" height="768" shape-rendering="crispEdges"><rect x="761.5" y="560.5" width="37" height="37" fill="#FFF0C8" stroke="#E68A3A"/><rect x="764.5" y="563.5" width="31" height="31" fill="#fff" stroke="#E68A3A"/><rect x="767" y="568" width="2" height="23" fill="#000"/><rect x="767" y="568" width="4" height="2" fill="#000"/><rect x="767" y="589" width="4" height="2" fill="#000"/><rect x="790" y="568" width="2" height="23" fill="#000"/><rect x="788" y="568" width="4" height="2" fill="#000"/><rect x="788" y="589" width="4" height="2" fill="#000"/><path d="M772 571h1v1h-1zM775 571h1v1h-1zM773 572h2v2h-2zM772 574h1v1h-1zM775 574h1v1h-1z" fill="#000"/><path d="M772 577h1v1h-1zM775 577h1v1h-1zM773 578h2v2h-2zM772 580h1v1h-1zM775 580h1v1h-1z" fill="#000"/><path d="M772 583h1v1h-1zM775 583h1v1h-1zM773 584h2v2h-2zM772 586h1v1h-1zM775 586h1v1h-1z" fill="#000"/><path d="M778 571h1v1h-1zM781 571h1v1h-1zM779 572h2v2h-2zM778 574h1v1h-1zM781 574h1v1h-1z" fill="#000"/><path d="M778 577h1v1h-1zM781 577h1v1h-1zM779 578h2v2h-2zM778 580h1v1h-1zM781 580h1v1h-1z" fill="#000"/><path d="M778 583h1v1h-1zM781 583h1v1h-1zM779 584h2v2h-2zM778 586h1v1h-1zM781 586h1v1h-1z" fill="#000"/><path d="M784 571h1v1h-1zM787 571h1v1h-1zM785 572h2v2h-2zM784 574h1v1h-1zM787 574h1v1h-1z" fill="#000"/><path d="M784 577h1v1h-1zM787 577h1v1h-1zM785 578h2v2h-2zM784 580h1v1h-1zM787 580h1v1h-1z" fill="#000"/><path d="M784 583h1v1h-1zM787 583h1v1h-1zM785 584h2v2h-2zM784 586h1v1h-1zM787 586h1v1h-1z" fill="#000"/><rect x="772" y="589" width="16" height="7" fill="#FFF0C8"/><path d="M762.5 574.5v8l4-4z" fill="#fff" stroke="#000" shape-rendering="auto"/></svg><div class="a" style="left:772px;top:589px;width:16px;font-size:8px;line-height:8px;font-weight:bold;text-align:center;letter-spacing:-0.3px;color:#E06A1A">DBL</div><div class="lbl" style="left:782px;top:596px">error out</div><svg style="left:0;top:0" width="1024" height="768" shape-rendering="crispEdges"><rect x="781.5" y="610.5" width="37" height="37" fill="#FFFFD8" stroke="#7A7A30"/><rect x="784.5" y="613.5" width="31" height="31" fill="#B8B8B0" stroke="#7A7A30"/><rect x="786.5" y="617.5" width="28" height="24" fill="#D4D0DC" stroke="#404040"/><rect x="790.5" y="621.5" width="10" height="3" fill="#FF80C8" stroke="#000"/><rect x="807.5" y="621.5" width="3" height="3" fill="#fff" stroke="#000"/><rect x="794.5" y="627.5" width="9" height="3" fill="#FF8050" stroke="#000"/><rect x="791.5" y="635.5" width="4" height="3" fill="#30B030" stroke="#000"/><rect x="801.5" y="634.5" width="9" height="3" fill="#101090" stroke="#000"/><rect x="792.5" y="639.5" width="14" height="7" fill="#FFFFB0" stroke="#7A7A30"/><rect x="794" y="641" width="4" height="2" fill="#fff"/><rect x="800" y="641" width="2" height="1" fill="#7A7A30"/><rect x="803" y="641" width="2" height="2" fill="#7A7A30"/><rect x="796" y="644" width="2" height="2" fill="#7A7A30"/><rect x="800" y="644" width="3" height="2" fill="#7A7A30"/><path d="M783.5 625.5v8l4-4z" fill="#fff" stroke="#000" shape-rendering="auto"/></svg><div class="lbl" style="left:851px;top:588px">residue</div><svg style="left:0;top:0" width="1024" height="768" shape-rendering="crispEdges"><rect x="851.5" y="602.5" width="37" height="37" fill="#FFF0C8" stroke="#E68A3A"/><rect x="854.5" y="605.5" width="31" height="31" fill="#A8A4AC" stroke="#E68A3A"/><rect x="855" y="607" width="28" height="24" fill="#B4B0B8"/><rect x="861" y="615" width="19" height="11" fill="#fff"/><rect x="861" y="614" width="19" height="1" fill="#707070"/><rect x="862" y="630" width="15" height="6" fill="#FFF0C8"/><path d="M852.5 616.5v8l4-4z" fill="#fff" stroke="#000" shape-rendering="auto"/></svg><div class="a" style="left:861px;top:613px;font-size:11px;line-height:14px;letter-spacing:-0.3px">1.23</div><div class="a" style="left:862px;top:630px;width:15px;font-size:8px;line-height:8px;font-weight:bold;text-align:center;letter-spacing:-0.3px;color:#E06A1A">DBL</div><div class="a" style="left:150px;top:660px;width:655px;height:120px;border:1px solid #C000C0"></div>
<div class="a" style="left:152px;top:722px;width:651px;height:60px;border-left:1px solid #C000C0;border-right:1px solid #C000C0"></div>
<div class="a" style="left:152px;top:662px;width:651px;height:60px;border-style:solid;border-color:#E600E6;border-width:3px 2px 2px 5px;background:#fff">
<div class="a" style="left:1px;top:0px;font-size:11px;line-height:14px;white-space:nowrap;letter-spacing:0.51px">(((1-(sin(x))^2)^(1/2)-((a1/a2)^2-sin(x)^2)^(1/2))^2)/((1-sin(x)^2)^(1/2)+((a1/a2)^2-sin(x)^2)^(1/2))^2</div></div><div class="a" style="left:398px;top:749px;width:32px;height:20px;border:1px solid #E600E6;background:#fff">
<div class="a" style="left:1px;top:1px;width:8px;height:16px;background:#F4B4F4;border:1px solid #E600E6"><svg style="left:0;top:1px" width="6" height="13" shape-rendering="crispEdges"><path d="M1 4h4M2 3h2M2.5 2h1M1 8h4M2 9h2M2.5 10h1" stroke="#E600E6"/></svg></div>
<div class="a" style="left:9px;top:1px;width:20px;height:16px;border:1px solid #E600E6;font-size:11px;line-height:14px;padding-left:1px">0</div></div>
<div class="a" style="left:430px;top:749px;width:28px;height:20px;border:1px solid #E600E6;background:#fff">
<div class="a" style="left:1px;top:1px;width:24px;height:18px;border:4px solid #E600E6;background:#fff;font-size:11px;line-height:11px;padding-left:1px">a1</div></div></body></html>
